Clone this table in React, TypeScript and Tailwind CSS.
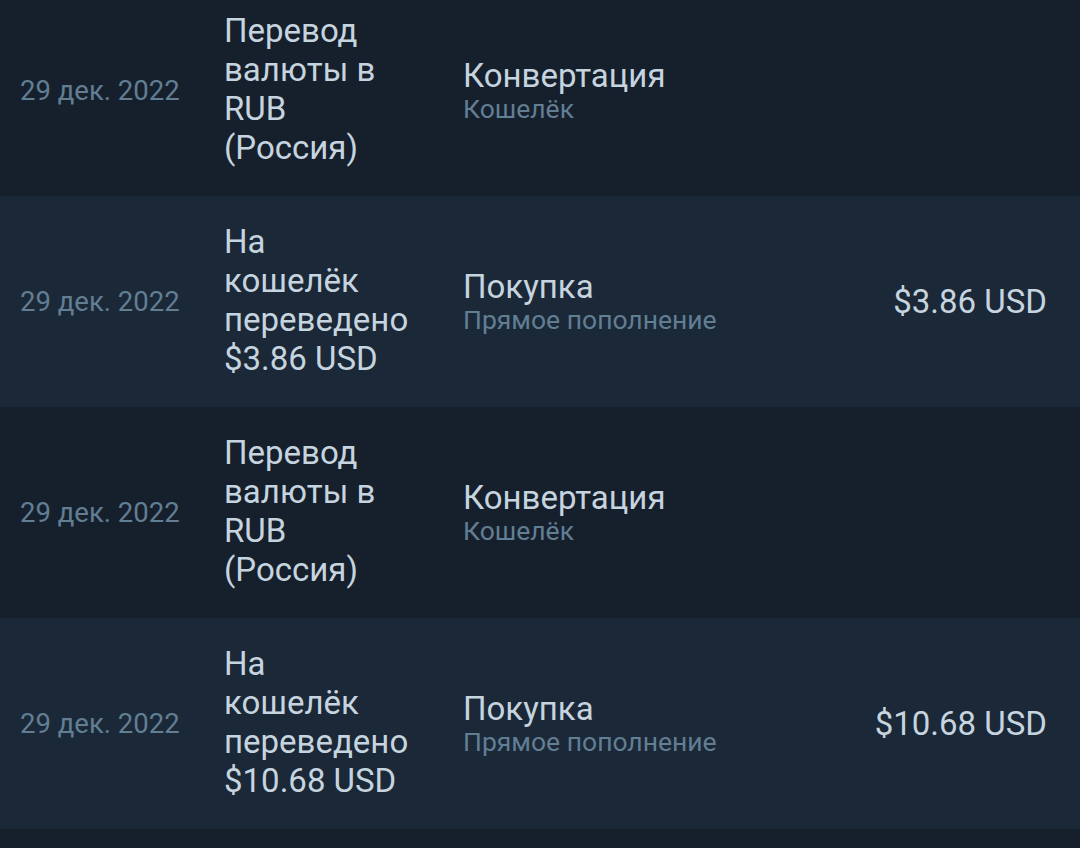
const rows = [
  {
    date: "29 дек. 2022",
    item: ["Перевод", "валюты в", "RUB", "(Россия)"],
    type: "Конвертация",
    source: "Кошелёк",
    amount: "",
  },
  {
    date: "29 дек. 2022",
    item: ["На", "кошелёк", "переведено", "$3.86 USD"],
    type: "Покупка",
    source: "Прямое пополнение",
    amount: "$3.86 USD",
  },
  {
    date: "29 дек. 2022",
    item: ["Перевод", "валюты в", "RUB", "(Россия)"],
    type: "Конвертация",
    source: "Кошелёк",
    amount: "",
  },
  {
    date: "29 дек. 2022",
    item: ["На", "кошелёк", "переведено", "$10.68 USD"],
    type: "Покупка",
    source: "Прямое пополнение",
    amount: "$10.68 USD",
  },
];

const App = () => {
  return (
    <div
      className="h-[848px] overflow-hidden bg-[#16202d]"
      style={{ fontFamily: "Roboto, 'Noto Sans', sans-serif" }}
    >
      {/* list is scrolled, first row is cut at the top */}
      <div className="-mt-[15px]">
        {rows.map((row, i) => (
          <div
            key={i}
            className={`flex h-[211px] items-center ${i % 2 === 0 ? "bg-[#16202d]" : "bg-[#1b2838]"}`}
          >
            <div className="w-[224px] shrink-0 pl-[20px] text-[27.5px] text-[#627e93]">{row.date}</div>
            <div className="w-[239px] shrink-0 pb-[4px] text-[33px] leading-[39px] text-[#c6d4df]">
              {row.item.map((line, j) => (
                <div key={j}>{line}</div>
              ))}
            </div>
            <div className="flex-1">
              <div className="text-[33px] leading-[36px] text-[#c6d4df]">{row.type}</div>
              <div className="text-[26.5px] leading-[30px] text-[#627e93]">{row.source}</div>
            </div>
            <div className="pr-[33px] text-[33px] text-[#c6d4df]">{row.amount}</div>
          </div>
        ))}
        <div className="h-[40px] bg-[#16202d]" />
      </div>
    </div>
  );
};

export default App;
